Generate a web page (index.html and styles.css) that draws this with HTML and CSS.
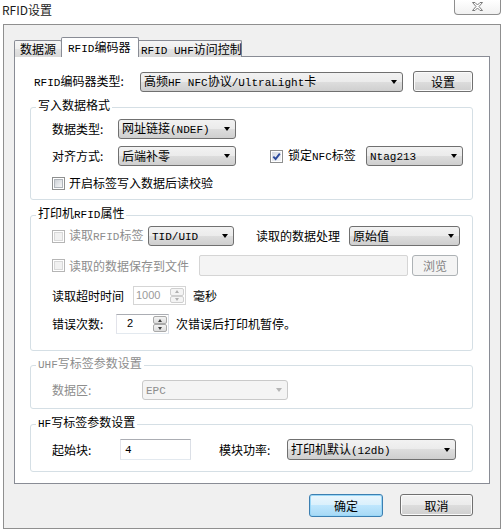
FILE: index.html
```html
<!DOCTYPE html>
<html>
<head>
<meta charset="utf-8">
<title>RFID设置</title>
<link rel="stylesheet" href="styles.css">
</head>
<body>
<div class="titlebar">
  <span class="title">RFID设置</span>
  <div class="close">
    <svg width="11" height="9" viewBox="0 0 11 9"><polygon points="0.5,0.5 3,0.5 5.5,3 8,0.5 10.5,0.5 7,4.5 10.5,8.5 8,8.5 5.5,6 3,8.5 0.5,8.5 4,4.5" fill="#fff" stroke="#7a7a7a" stroke-width="1" stroke-linejoin="round"/></svg>
  </div>
</div>
<div class="frame">
  <div class="tabs">
    <div class="tab t1">数据源</div>
    <div class="tab t2 active"><span class="en">RFID</span>编码器</div>
    <div class="tab t3"><span class="en">RFID UHF</span>访问控制</div>
  </div>
  <div class="panel">
    <div class="r-top">
      <span class="lbl l-type"><span class="en">RFID</span>编码器类型:</span>
      <div class="combo w-type"><span class="cv">高频<span class="en">HF NFC</span>协议<span class="en">/UltraLight</span>卡</span><i class="caret"></i></div>
      <button class="btn b-set">设置</button>
    </div>

    <fieldset class="grp g1">
      <legend>写入数据格式</legend>
      <div class="row h20">
        <span class="lbl l66">数据类型:</span>
        <div class="combo w118"><span class="cv">网址链接<span class="en">(NDEF)</span></span><i class="caret"></i></div>
      </div>
      <div class="row h20 mt7">
        <span class="lbl l66">对齐方式:</span>
        <div class="combo w118"><span class="cv">后端补零</span><i class="caret"></i></div>
        <span class="cb on ml34"><svg width="9" height="9" viewBox="0 0 9 9"><path d="M1.3 4.6 L3.6 7 L7.8 1.6" fill="none" stroke="#2c4a9c" stroke-width="1.9"/></svg></span>
        <span class="cbt l-lock">锁定<span class="en">NFC</span>标签</span>
        <div class="combo w97"><span class="cv"><span class="en">Ntag213</span></span><i class="caret"></i></div>
      </div>
      <div class="row h16 mt9">
        <span class="cb"><i></i></span>
        <span class="cbt">开启标签写入数据后读校验</span>
      </div>
    </fieldset>

    <fieldset class="grp g2">
      <legend>打印机<span class="en">RFID</span>属性</legend>
      <div class="row h20">
        <span class="cb dis"><i></i></span>
        <span class="cbt dtext l-read">读取<span class="en">RFID</span>标签</span>
        <div class="combo w86"><span class="cv"><span class="en">TID/UID</span></span><i class="caret"></i></div>
        <span class="lbl l-proc">读取的数据处理</span>
        <div class="combo w111"><span class="cv">原始值</span><i class="caret"></i></div>
      </div>
      <div class="row h21 mt9">
        <span class="cb dis"><i></i></span>
        <span class="cbt dtext l-save">读取的数据保存到文件</span>
        <div class="tb dis w209"></div>
        <button class="btn dis b-browse">浏览</button>
      </div>
      <div class="row h19 mt10">
        <span class="lbl l81">读取超时时间</span>
        <div class="spin dis"><span class="sv">1000</span><span class="sb"><i class="up"></i><i class="dn"></i></span></div>
        <span class="after">毫秒</span>
      </div>
      <div class="row h20 mt9">
        <span class="lbl l64">错误次数:</span>
        <div class="spin s-err"><span class="sv">2</span><span class="sb"><i class="up"></i><i class="dn"></i></span></div>
        <span class="after">次错误后打印机暂停。</span>
      </div>
    </fieldset>

    <fieldset class="grp g3 disabled">
      <legend><span class="en">UHF</span>写标签参数设置</legend>
      <div class="row h19">
        <span class="lbl l90 dtext">数据区:</span>
        <div class="combo dis w146"><span class="cv"><span class="en">EPC</span></span><i class="caret"></i></div>
      </div>
    </fieldset>

    <fieldset class="grp g4">
      <legend><span class="en">HF</span>写标签参数设置</legend>
      <div class="row h21">
        <span class="lbl l68">起始块:</span>
        <div class="tb w71"><span class="en">4</span></div>
        <span class="lbl l68 ml28">模块功率:</span>
        <div class="combo w169"><span class="cv">打印机默认<span class="en">(12db)</span></span><i class="caret"></i></div>
      </div>
    </fieldset>
  </div>
  <div class="actions">
    <button class="btn def b-ok">确定</button>
    <button class="btn b-cancel">取消</button>
  </div>
</div>
</body>
</html>
```

FILE: styles.css
```css
* { box-sizing: border-box; }
html, body { margin: 0; padding: 0; }
body {
  width: 503px;
  height: 531px;
  overflow: hidden;
  background: #ffffff;
  color: #000;
  font-family: "Noto Sans CJK SC", "Liberation Sans", sans-serif;
  font-size: 12px;
  line-height: 16px;
}
.en { font-family: "Liberation Mono", "Noto Sans CJK SC", monospace; font-size: 11px; }

/* title bar */
.titlebar {
  height: 24px;
  display: flex;
  justify-content: space-between;
  align-items: flex-start;
  padding: 0 2px 0 2px;
}
.title { line-height: 20px; color: #1b1b1b; }
.close {
  width: 47px;
  height: 15px;
  border: 1px solid #8e8e8e;
  border-top: 0;
  border-radius: 0 0 4px 4px;
  background: linear-gradient(#ffffff, #f1f1f1);
  display: flex;
  align-items: center;
  justify-content: center;
  padding-bottom: 1px;
}

/* dialog frame */
.frame {
  margin-left: 3px;
  width: 498px;
  height: 505px;
  border: 1px solid #8f8f8f;
  background: #f0f0f0;
  padding: 12px 0 0 10px;
}

/* tabs */
.tabs { display: flex; align-items: flex-end; height: 20px; }
.tab {
  height: 17px;
  border: 1px solid #898c95;
  border-bottom: 0;
  border-radius: 2px 2px 0 0;
  background: linear-gradient(#f5f5f5, #eeeeee 50%, #e3e3e3 50%, #d9d9d9);
  line-height: 15px;
  white-space: nowrap;
  padding-left: 5px;
}
.t1 { width: 48px; margin-right: -1px; }
.t2 { width: 78px; margin-right: -2px; }
.t3 { width: 105px; padding-left: 3px; }
.tab.active {
  height: 20px;
  background: #ffffff;
  position: relative;
  z-index: 1;
  line-height: 18px;
  padding-left: 6px;
}

/* panel */
.panel {
  margin-top: -1px;
  width: 476px;
  height: 428px;
  border: 1px solid #898c95;
  background: #ffffff;
  padding: 14px 0 0 15px;
}
.r-top { display: flex; align-items: center; height: 21px; margin-left: 4px; }
.lbl { flex: none; white-space: nowrap; }
.l-type { width: 106px; }

/* combobox */
.combo {
  flex: none;
  display: flex;
  align-items: center;
  height: 20px;
  border: 1px solid #707070;
  border-radius: 3px;
  background: linear-gradient(#f2f2f2, #ebebeb 50%, #dddddd 50%, #cfcfcf);
  padding-left: 3px;
  white-space: nowrap;
  overflow: hidden;
}
.cv { overflow: hidden; line-height: 16px; }
.caret {
  margin-left: auto;
  margin-right: 5px;
  width: 0;
  height: 0;
  border-left: 3.5px solid transparent;
  border-right: 3.5px solid transparent;
  border-top: 4px solid #000;
  flex: none;
}
.combo.dis {
  border-color: #c9c9c9;
  background: #f4f4f4;
  color: #8d8d8d;
}
.combo.dis .caret { border-top-color: #b5b5b5; }
.w-type { width: 263px; }
.w118 { width: 118px; }
.w97 { width: 97px; }
.w86 { width: 86px; }
.w111 { width: 111px; }
.w146 { width: 146px; }
.w169 { width: 169px; height: 21px; }

/* buttons */
.btn {
  flex: none;
  font: inherit;
  color: #000;
  height: 21px;
  padding: 0;
  border: 1px solid #707070;
  border-radius: 3px;
  background: linear-gradient(#f2f2f2, #ebebeb 50%, #dddddd 50%, #cfcfcf);
  box-shadow: inset 0 0 0 1px #fbfbfb;
  line-height: 17px;
}
.btn.dis {
  border-color: #adb2b5;
  background: #f4f4f4;
  box-shadow: none;
  color: #838383;
}
.btn.def {
  border-color: #3c7fb1;
  box-shadow: inset 0 0 0 1px #9ad7f7;
  background: linear-gradient(#eaf6fd, #d9f0fc 50%, #bee6fd 50%, #a7d9f5);
}
.b-set { width: 60px; margin-left: 10px; }
.b-browse { width: 46px; height: 21px; margin-left: 4px; }
.b-ok { width: 74px; height: 23px; }
.b-cancel { width: 73px; height: 22px; }

/* group boxes */
.grp {
  margin: 7px 0 0 0;
  width: 443px;
  min-width: 0;
  border: 1px solid #d5dfe5;
  border-radius: 3px;
  padding: 4px 0 8px 5px;
}
.grp legend {
  padding: 0 2px 4px 2px;
  height: 16px;
  line-height: 12px;
}
.grp legend .en { line-height: 8px; }
.g2 { padding-top: 3px; padding-bottom: 16px; }
.g3 { margin-top: 6px; padding-top: 7px; padding-bottom: 9px; }
.g4 { margin-top: 7px; padding-top: 7px; padding-bottom: 11px; }
.g3 legend { color: #8d8d8d; }

.row { display: flex; align-items: center; margin-left: 16px; }
.h16 { height: 16px; }
.h19 { height: 19px; }
.h20 { height: 20px; }
.h21 { height: 21px; }
.mt7 { margin-top: 7px; }
.mt9 { margin-top: 9px; }
.mt10 { margin-top: 10px; }
.ml34 { margin-left: 34px; }
.ml28 { margin-left: 28px; }
.l66 { width: 66px; }
.l64 { width: 64px; }
.l68 { width: 68px; }
.l81 { width: 81px; }
.l90 { width: 90px; }
.l-proc { width: 93px; margin-left: 22px; }
.dtext { color: #8d8d8d; }

/* checkbox */
.cb {
  flex: none;
  width: 13px;
  height: 13px;
  border: 1px solid #8e8f8f;
  background: #ffffff;
  padding: 1px;
  display: flex;
}
.cb i {
  display: block;
  width: 9px;
  height: 9px;
  border: 1px solid #b0b5bb;
  background: linear-gradient(135deg, #cdd1d6, #f5f6f7);
}
.cb.on { background: #fff; }
.cb.on svg { background: linear-gradient(135deg, #d6dbe3, #f4f6f9); }
.cb.dis { border-color: #b5b5b5; }
.cb.dis i { border-color: #d8d8d8; background: #f1f1f1; }
.cbt { flex: none; margin-left: 4px; white-space: nowrap; }
.l-lock { width: 78px; margin-left: 5px; }
.l-read { width: 79px; }
.l-save { width: 130px; }

/* textbox */
.tb {
  flex: none;
  height: 21px;
  border: 1px solid;
  border-color: #abadb3 #dbdfe6 #e3e9ef #e2e3ea;
  background: #ffffff;
  padding-left: 4px;
  display: flex;
  align-items: center;
}
.tb.dis { border: 1px solid #d5d5d5; border-radius: 2px; background: #f4f4f4; }
.w209 { width: 209px; }
.w71 { width: 71px; }

/* spin box */
.spin {
  flex: none;
  display: flex;
  width: 53px;
  height: 19px;
  border: 1px solid;
  border-color: #abadb3 #dbdfe6 #e3e9ef #e2e3ea;
  background: #fff;
  padding: 1px 1px 1px 0;
}
.s-err { height: 20px; }
.sv {
  flex: 1;
  font-family: "Liberation Sans", sans-serif;
  font-size: 11px;
  line-height: 15px;
  padding-left: 2px;
}
.s-err .sv { padding-left: 10px; }
.sb { width: 14px; display: flex; flex-direction: column; }
.sb i {
  flex: 1;
  display: flex;
  align-items: center;
  justify-content: center;
  border: 1px solid #a9a9a9;
  border-radius: 2px;
  background: linear-gradient(#f4f4f4, #dcdcdc);
}
.sb i::before {
  content: "";
  width: 0;
  height: 0;
  border-left: 2.5px solid transparent;
  border-right: 2.5px solid transparent;
}
.sb .up::before { border-bottom: 3px solid #404040; }
.sb .dn::before { border-top: 3px solid #404040; }
.spin.dis { border-color: #d5d5d5; }
.spin.dis .sv { color: #9a9a9a; }
.spin.dis .sb i { border-color: #cfcfcf; background: #f4f4f4; }
.spin.dis .sb .up::before { border-bottom-color: #b0b0b0; }
.spin.dis .sb .dn::before { border-top-color: #b0b0b0; }
.after { margin-left: 7px; white-space: nowrap; }

/* bottom buttons */
.actions {
  display: flex;
  justify-content: flex-end;
  align-items: flex-start;
  gap: 17px;
  margin-top: 10px;
  padding-right: 27px;
}
```
